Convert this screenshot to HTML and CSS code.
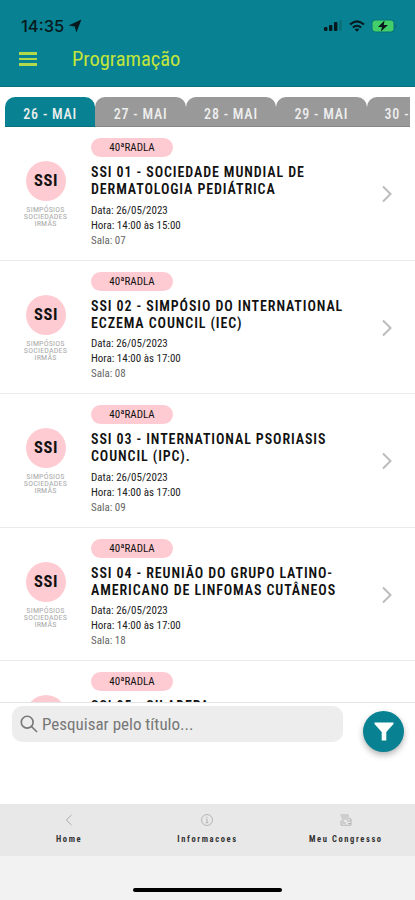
FILE: index.html
```html
<!DOCTYPE html>
<html lang="pt-BR">
<head>
    <meta charset="UTF-8">
    <meta name="viewport" content="width=device-width, initial-scale=1.0">
    <title>Programação</title>
    <link rel="stylesheet" href="styles.css">
</head>
<body>
    <header class="header">
        <div class="status">
            <span class="time">14:35</span>
            <svg class="location" width="14" height="14" viewBox="0 0 14 14"><path d="M13.4 0.6 L8.4 13.4 L6.8 7.4 L0.6 6.6 Z" fill="#07191c"/></svg>
            <div class="status-icons">
                <svg width="19" height="12" viewBox="0 0 19 12"><g fill="#07191c"><rect x="0" y="7" width="3.4" height="4" rx="1"/><rect x="5" y="5" width="3.4" height="6" rx="1"/><rect x="10" y="2" width="3.4" height="9" rx="1"/></g><rect x="15" y="0" width="3" height="11" rx="1" fill="#08717c"/></svg>
                <svg width="16" height="13" viewBox="0 0 16 13" fill="none" stroke="#07191c" stroke-width="2"><path d="M1 4.6 Q8 -1.8 15 4.6"/><path d="M3.8 7.6 Q8 3.8 12.2 7.6"/><path d="M5.8 9.4 Q8 7.6 10.2 9.4 L8 11.8 Z" fill="#07191c" stroke="none"/></svg>
                <svg width="26" height="14" viewBox="0 0 26 14"><rect x="0.5" y="0.5" width="23" height="13" rx="4" fill="#08717c"/><rect x="1.5" y="1.5" width="21" height="11" rx="3" fill="#42cf69"/><path d="M24.5 5 V9" stroke="#08717c" stroke-width="1.5"/><path d="M13.5 1.5 L7 8 H11 L9.8 12.5 L17 6 H12.8 Z" fill="#07191c"/></svg>
            </div>
        </div>
        <div class="toolbar">
            <div class="menu"><span></span><span></span><span></span></div>
            <h1>Programação</h1>
        </div>
    </header>

    <nav class="tabs">
        <div class="tab active">26 - MAI</div>
        <div class="tab">27 - MAI</div>
        <div class="tab">28 - MAI</div>
        <div class="tab">29 - MAI</div>
        <div class="tab last">30 -</div>
    </nav>

    <main class="list">
        <article class="item">
            <div class="category"><div class="circle">SSI</div><p>SIMPÓSIOS<br>SOCIEDADES<br>IRMÃS</p></div>
            <div class="info">
                <span class="badge">40ªRADLA</span>
                <h2>SSI 01 - SOCIEDADE MUNDIAL DE<br>DERMATOLOGIA PEDIÁTRICA</h2>
                <p>Data: 26/05/2023</p>
                <p>Hora: 14:00 às 15:00</p>
                <p class="room">Sala: 07</p>
            </div>
            <svg class="arrow" width="12" height="18" viewBox="0 0 12 18"><path d="M2 1.5 L9.5 9 L2 16.5"/></svg>
        </article>
        <article class="item">
            <div class="category"><div class="circle">SSI</div><p>SIMPÓSIOS<br>SOCIEDADES<br>IRMÃS</p></div>
            <div class="info">
                <span class="badge">40ªRADLA</span>
                <h2>SSI 02 - SIMPÓSIO DO INTERNATIONAL<br>ECZEMA COUNCIL (IEC)</h2>
                <p>Data: 26/05/2023</p>
                <p>Hora: 14:00 às 17:00</p>
                <p class="room">Sala: 08</p>
            </div>
            <svg class="arrow" width="12" height="18" viewBox="0 0 12 18"><path d="M2 1.5 L9.5 9 L2 16.5"/></svg>
        </article>
        <article class="item">
            <div class="category"><div class="circle">SSI</div><p>SIMPÓSIOS<br>SOCIEDADES<br>IRMÃS</p></div>
            <div class="info">
                <span class="badge">40ªRADLA</span>
                <h2>SSI 03 - INTERNATIONAL PSORIASIS<br>COUNCIL (IPC).</h2>
                <p>Data: 26/05/2023</p>
                <p>Hora: 14:00 às 17:00</p>
                <p class="room">Sala: 09</p>
            </div>
            <svg class="arrow" width="12" height="18" viewBox="0 0 12 18"><path d="M2 1.5 L9.5 9 L2 16.5"/></svg>
        </article>
        <article class="item">
            <div class="category"><div class="circle">SSI</div><p>SIMPÓSIOS<br>SOCIEDADES<br>IRMÃS</p></div>
            <div class="info">
                <span class="badge">40ªRADLA</span>
                <h2>SSI 04 - REUNIÃO DO GRUPO LATINO-<br>AMERICANO DE LINFOMAS CUTÂNEOS</h2>
                <p>Data: 26/05/2023</p>
                <p>Hora: 14:00 às 17:00</p>
                <p class="room">Sala: 18</p>
            </div>
            <svg class="arrow" width="12" height="18" viewBox="0 0 12 18"><path d="M2 1.5 L9.5 9 L2 16.5"/></svg>
        </article>
        <article class="item">
            <div class="category"><div class="circle">SSI</div></div>
            <div class="info">
                <span class="badge">40ªRADLA</span>
                <h2>SSI 05 - SILADEPA</h2>
            </div>
        </article>
    </main>

    <section class="search">
        <div class="field">
            <svg width="18" height="18" viewBox="0 0 18 18" fill="none" stroke="#777" stroke-width="1.6"><circle cx="7.2" cy="7.2" r="5.9"/><path d="M11.5 11.5 L17 17"/></svg>
            <span>Pesquisar pelo título...</span>
        </div>
        <div class="filter">
            <svg width="20" height="19" viewBox="0 0 20 19"><path d="M0.5 0.5 H19.5 V2 L12.3 10 V18.5 H7.7 V10 L0.5 2 Z" fill="#fff"/></svg>
        </div>
    </section>

    <footer class="bottom-nav">
        <div class="nav-item">
            <svg width="12" height="12" viewBox="0 0 12 12" fill="none" stroke="#aaa"><path d="M8.5 1 L3.3 6 L8.5 11"/></svg>
            <span>Home</span>
        </div>
        <div class="nav-item">
            <svg width="12" height="12" viewBox="0 0 12 12" fill="none" stroke="#aaa" stroke-width="0.8"><circle cx="6" cy="6" r="5.5"/><path d="M6 2.8 V4 M5 5.3 H6.1 V8.7 M4.7 8.7 H7.4"/></svg>
            <span>Informacoes</span>
        </div>
        <div class="nav-item">
            <svg width="12" height="12" viewBox="0 0 12 12" fill="none" stroke="#b5b5b5"><path d="M0.5 1 H8 V4 M1 3 H7 M2 5 H8.5 M4 7 H1 V11.2 H11 V5 L9 4.5 M2 9 H6 M7 7 H11 M8 9.5 H11"/></svg>
            <span>Meu Congresso</span>
        </div>
    </footer>
    <div class="home-area"><div class="home-bar"></div></div>
</body>
</html>
```

FILE: styles.css
```css
* {
    box-sizing: border-box;
}
body {
    margin: 0;
    height: 900px;
    overflow: hidden;
    display: flex;
    flex-direction: column;
    background-color: #fff;
    font-family: "Roboto Condensed", Roboto, sans-serif;
    font-stretch: 75%;
    color: #111;
}
h1, h2, p {
    margin: 0;
}
.header {
    flex: none;
    height: 87px;
    background-color: #088292;
    border-bottom: 1px solid #08717c;
}
.status {
    display: flex;
    align-items: center;
    height: 28px;
    margin-top: 12px;
    padding: 0 18px 0 21px;
}
.time {
    width: 43px;
    font-family: Inter, sans-serif;
    font-stretch: normal;
    font-size: 16.5px;
    font-weight: 500;
    color: #07191c;
}
.location {
    margin-left: 4px;
}
.status-icons {
    display: flex;
    align-items: center;
    gap: 6px;
    margin-left: auto;
}
.toolbar {
    display: flex;
    align-items: center;
    height: 38px;
    padding-left: 19px;
}
.menu {
    display: flex;
    flex-direction: column;
    gap: 3px;
    width: 18px;
    margin-right: 35px;
}
.menu span {
    height: 2.5px;
    background-color: #b0d94c;
}
.toolbar h1 {
    font-size: 20.5px;
    font-weight: 400;
    color: #c3e53b;
}
.tabs {
    flex: none;
    display: flex;
    height: 40px;
    margin: 0 5px;
    padding-top: 10px;
    overflow: hidden;
}
.tab {
    flex: none;
    width: 90.4px;
    height: 30px;
    padding-top: 4px;
    border-radius: 10px 10px 0 0;
    border-bottom: 1px solid #888;
    background-color: #999;
    color: #eee;
    font-size: 14px;
    font-weight: 500;
    letter-spacing: 0.8px;
    line-height: 27px;
    text-align: center;
}
.tab.active {
    background-color: #088292;
    border-color: #08717c;
}
.tab.last {
    padding-left: 18px;
    text-align: left;
}
.list {
    flex: none;
    height: 575px;
    overflow: hidden;
}
.item {
    display: flex;
    height: 133.6px;
    border-bottom: 1.5px solid #ebebeb;
}
.category {
    width: 91px;
    padding-top: 34px;
}
.circle {
    width: 40px;
    height: 40px;
    margin: 0 auto 5px 26px;
    border-radius: 50%;
    background-color: #ffcbd2;
    font-size: 16.5px;
    font-weight: 700;
    letter-spacing: 0.6px;
    line-height: 39px;
    text-align: center;
}
.category p {
    font-size: 8px;
    line-height: 7px;
    letter-spacing: 0.2px;
    text-align: center;
    color: #aaa;
}
.info {
    flex: 1;
    padding-top: 11px;
    white-space: nowrap;
}
.badge {
    display: block;
    width: 82px;
    height: 19px;
    border-radius: 10px;
    background-color: #ffcbd2;
    font-size: 11px;
    line-height: 20px;
    text-align: center;
}
.info h2 {
    margin: 7px 0 4.5px;
    font-size: 14px;
    font-weight: 600;
    line-height: 17px;
    letter-spacing: 0.9px;
}
.info p {
    font-size: 11px;
    line-height: 15px;
    color: #222;
}
.info .room {
    color: #666;
}
.arrow {
    flex: none;
    margin: 58px 22px 0 0;
    fill: none;
    stroke: #bcbcbc;
    stroke-width: 2;
}
.search {
    flex: none;
    display: flex;
    height: 102px;
    padding: 3px 11px 0 12px;
    border-top: 1px solid #e5e5e5;
}
.field {
    display: flex;
    align-items: center;
    gap: 4px;
    width: 331px;
    height: 36px;
    padding-left: 8px;
    border-radius: 10px;
    background-color: #ededed;
    color: #777;
    font-size: 17px;
}
.filter {
    display: flex;
    align-items: center;
    justify-content: center;
    width: 41px;
    height: 41px;
    margin: 5px 0 0 auto;
    border-radius: 50%;
    background-color: #088292;
    box-shadow: 0 3px 6px rgba(0, 0, 0, 0.3);
}
.bottom-nav {
    flex: none;
    display: flex;
    height: 52px;
    background-color: #e8e8e8;
}
.nav-item {
    flex: 1;
    display: flex;
    flex-direction: column;
    align-items: center;
    gap: 8px;
    padding-top: 10px;
    font-size: 8.5px;
    font-weight: 700;
    line-height: 10px;
    letter-spacing: 1.6px;
    color: #333;
}
.home-area {
    flex: 1;
    padding-top: 32px;
    background-color: #f2f2f2;
}
.home-bar {
    width: 149px;
    height: 4px;
    margin: 0 auto;
    border-radius: 2px;
    background-color: #000;
}
```
